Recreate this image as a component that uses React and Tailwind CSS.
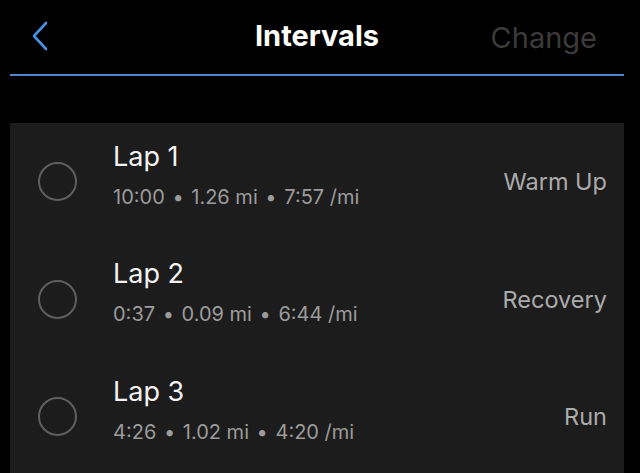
/*
 * intervals screen - list of laps with time, distance, pace and type
 */
const laps = [
  { name: 'Lap 1', time: '10:00', dist: '1.26 mi', pace: '7:57 /mi', type: 'Warm Up' },
  { name: 'Lap 2', time: '0:37', dist: '0.09 mi', pace: '6:44 /mi', type: 'Recovery' },
  { name: 'Lap 3', time: '4:26', dist: '1.02 mi', pace: '4:20 /mi', type: 'Run' },
];

export default function App() {
  return (
    <div className="w-[640px] h-[473px] overflow-hidden bg-black font-['Inter',sans-serif]">
      {/* header */}
      <div className="relative h-[74px] flex items-center justify-center">
        <button className="absolute left-[31px] top-[20px] w-[20px] h-[32px] cursor-pointer">
          <svg width="20" height="32" viewBox="0 0 20 32" fill="none">
            <path d="M15 3 L3 16 L15 29" stroke="#4a90e2" strokeWidth="2.6" strokeLinecap="round" strokeLinejoin="round" />
          </svg>
        </button>
        <h1 className="text-[29px] font-bold text-white mt-[-2px] mr-[6px]">Intervals</h1>
        <span className="absolute right-[43px] top-[16px] text-[29px] text-[#3b3b3b]">Change</span>
      </div>
      <div className="ml-[10px] mr-[16px] h-[2px] bg-[#4a86c8]" />

      {/* laps card */}
      <div className="ml-[10px] mr-[16px] mt-[47px] bg-[#1c1c1c]">
        {laps.map(lap => (
          <div key={lap.name} className="h-[117.5px] flex items-center">
            <div className="ml-[28px] w-[39px] h-[39px] rounded-full border-2 border-[#5f5f5f]" />
            <div className="ml-[36px] flex-1 -mt-[13px]">
              <p className="text-[27px] leading-[30px] text-[#f2f2f2]">{lap.name}</p>
              <p className="mt-[13px] text-[20px] leading-[24px] text-[#9b9b9b]">
                {lap.time} <span className="mx-[2px]">•</span> {lap.dist} <span className="mx-[2px]">•</span> {lap.pace}
              </p>
            </div>
            <span className="mr-[17px] text-[23.5px] text-[#ababab]">{lap.type}</span>
          </div>
        ))}
      </div>
    </div>
  );
}
